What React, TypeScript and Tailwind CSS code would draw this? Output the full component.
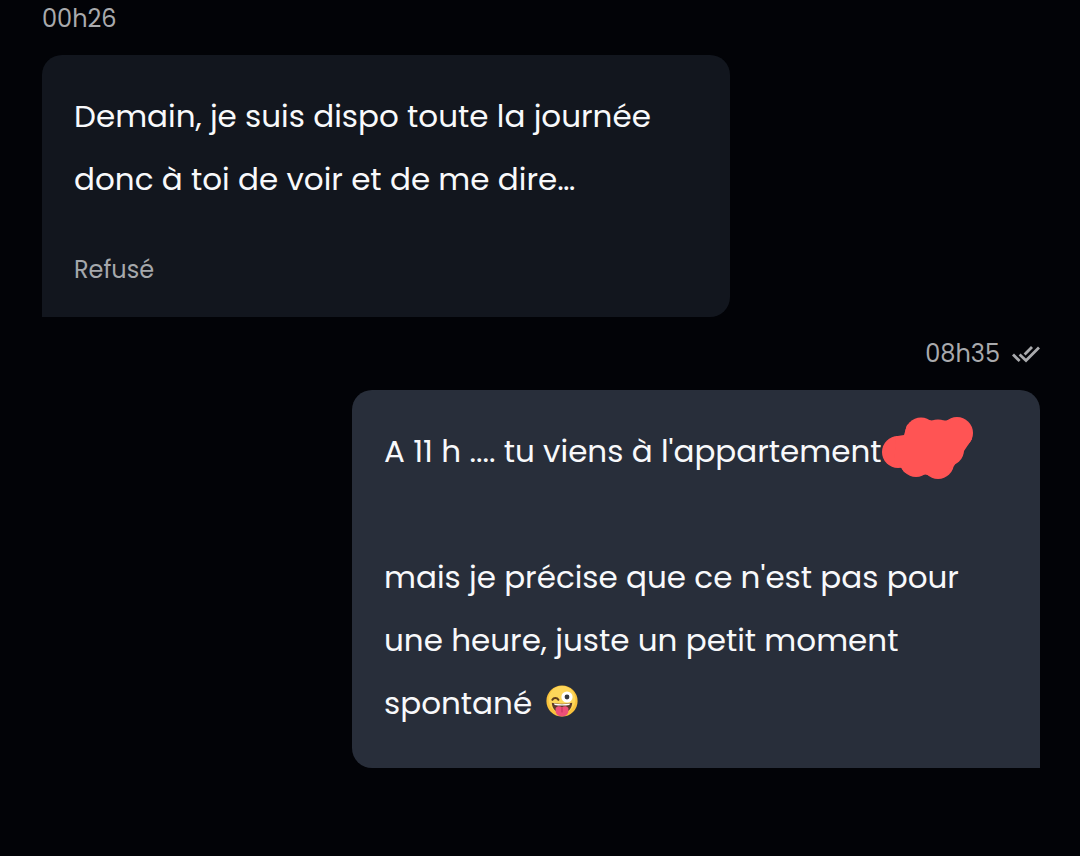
import type { ReactNode } from "react";

type Side = "received" | "sent";

function DoubleCheck() {
  return (
    <svg viewBox="0 0 28 18" className="h-[18px] w-7" fill="none" stroke="currentColor" strokeWidth="2.8" role="img" aria-label="Lu">
      <path d="M1 9.4 7.6 16" />
      <path d="M7.6 9.6 14 15.6 27 2.4" />
      <path d="M12.6 9.4 20 2" />
    </svg>
  );
}

// Brush mark that hides the end of the address
function Scribble() {
  return (
    <svg viewBox="0 0 92 62" className="absolute -top-[3px] left-full h-[62px] w-[92px]" fill="#ff5454" aria-hidden="true">
      <circle cx="16" cy="35" r="16" />
      <circle cx="34" cy="44" r="16" />
      <circle cx="56" cy="46" r="16" />
      <circle cx="39" cy="16.5" r="16" />
      <circle cx="56" cy="18.5" r="16" />
      <circle cx="75" cy="16" r="16" />
      <circle cx="66" cy="33" r="16" />
      <path d="M14 19.2 22 18 25 8 39 2 50 3.5 64 3.5 75 1 90 22 82 34 72 49 56 60 43 57.5 34 59 22 55 19 50.5 12 48Z" />
    </svg>
  );
}

function WinkingTongue() {
  return (
    <svg viewBox="0 0 32 32" className="ml-1.5 inline-block size-8 align-[-3px]" role="img" aria-label="Clin d'œil, langue tirée">
      <circle cx="16" cy="16" r="15.6" fill="#f9c23c" />
      <circle cx="16" cy="14.5" r="13.4" fill="#fdd65a" />
      <path d="M6.4 14.8C7.6 12.4 11 12.4 12.4 14.8" fill="none" stroke="#5d3b1d" strokeWidth="2" strokeLinecap="round" />
      <circle cx="21" cy="12" r="5.6" fill="#fff" />
      <circle cx="21" cy="12" r="2.4" fill="#35383f" />
      <path d="M5.8 17.8C12 19.2 20 19.2 26.2 17.8 25.8 24 21.8 28 16 28S6.2 24 5.8 17.8Z" fill="#5c3a2b" />
      <path d="M8 18.6C13 19.4 19 19.4 24 18.6L23.4 20C19 20.8 13 20.8 8.6 20Z" fill="#fff" />
      <path d="M9.6 23C11.2 20.8 14.2 21 16 22.2 17.8 21 20.8 20.8 22.4 23V26C22.4 33.2 9.6 33.2 9.6 26Z" fill="#ee4f78" />
      <path d="M16 22.8V27" stroke="#c93561" strokeWidth="1.2" strokeLinecap="round" />
    </svg>
  );
}

function Message({ side, time, status, children }: { side: Side; time: string; status?: string; children: ReactNode }) {
  const sent = side === "sent";
  return (
    <article className={sent ? "flex flex-col items-end" : "flex flex-col items-start"}>
      <header className="mb-[17px] flex items-center gap-3 text-2xl leading-[38px] text-[#a9aaad]">
        <time>{time}</time>
        {sent && <DoubleCheck />}
      </header>
      <div
        className={
          sent
            ? "w-full max-w-[688px] rounded-[20px] rounded-br-none bg-[#282e3a] px-8 pt-[30px] pb-[33px]"
            : "w-full max-w-[688px] rounded-[20px] rounded-bl-none bg-[#12161e] px-8 pt-[30px] pb-[31px]"
        }
      >
        <div className="text-[31px] leading-[63px] text-[#f8f9fb]">{children}</div>
        {status && <p className="mt-[43px] text-2xl leading-8 text-[#a5a8ac]">{status}</p>}
      </div>
    </article>
  );
}

export default function App() {
  return (
    <main className="flex min-h-screen flex-col gap-[18px] bg-[#020307] pr-10 pb-20 pl-[42px] font-[Poppins,Inter,sans-serif]">
      <Message side="received" time="00h26" status="Refusé">
        <p>Demain, je suis dispo toute la journée donc à toi de voir et de me dire…</p>
      </Message>
      <Message side="sent" time="08h35">
        <p className="mb-[63px]">
          <span className="relative inline-block">
            A 11 h .... tu viens à l'appartement
            <Scribble />
          </span>
        </p>
        <p>
          mais je précise que ce n'est pas pour une heure, juste un petit moment spontané <WinkingTongue />
        </p>
      </Message>
    </main>
  );
}
